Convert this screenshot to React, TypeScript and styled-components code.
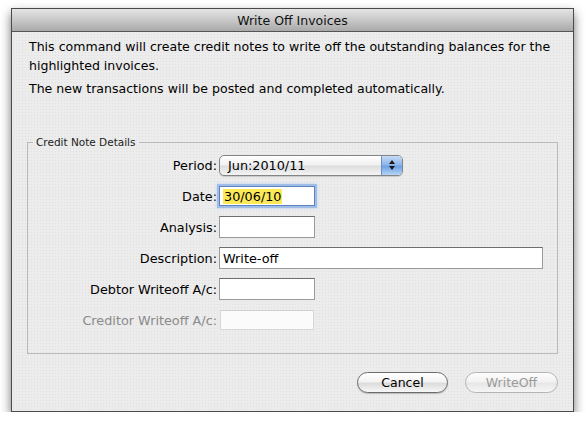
import React from "react";
import styled, { createGlobalStyle } from "styled-components";

const GlobalStyle = createGlobalStyle`
    html, body {
        margin: 0;
        padding: 0;
        background: #ffffff;
    }
    body {
        font-family: "DejaVu Sans", "Liberation Sans", sans-serif;
        color: #000;
    }
`;

const Page = styled.div`
    padding: 8px 12px 0 11px;
`;

const Window = styled.div`
    width: 561px;
    border: 1px solid #4a4a4a;
    background-color: #ececec;
    background-image: radial-gradient(rgba(0, 0, 0, 0.05) 0.6px, transparent 0.8px);
    background-size: 3px 3px;
    box-shadow: 0 5px 10px rgba(0, 0, 0, 0.55);
`;

const TitleBar = styled.div`
    height: 22px;
    border-bottom: 1px solid #555;
    background: linear-gradient(#e4e4e4, #c8c8c8 50%, #a9a9a9);
    display: flex;
    align-items: center;
    justify-content: center;
    font-size: 12.5px;
    color: #111;
`;

const Content = styled.div`
    padding: 5px 15px 18px 15px;
`;

const Para = styled.p<{ $gap?: number }>`
    margin: ${(p) => p.$gap ?? 0}px -14px 0 2px;
    font-size: 12.55px;
    line-height: 19px;
`;

const Group = styled.fieldset`
    margin: 38px 0 0 0;
    padding: 6px 0 22px 0;
    border: 1px solid #b9b9b9;
    border-radius: 0;
`;

const Legend = styled.legend`
    margin-left: 5px;
    padding: 0 3px;
    font-size: 10.5px;
    color: #222;
`;

const Form = styled.div`
    display: grid;
    grid-template-columns: 189px 1fr;
    grid-auto-rows: 22px;
    column-gap: 2px;
    row-gap: 9px;
    align-items: center;
`;

const Label = styled.label<{ $disabled?: boolean }>`
    text-align: right;
    font-size: 12.8px;
    color: ${(p) => (p.$disabled ? "#8a8a8a" : "#000")};
`;

const Field = styled.div<{ $width: number; $focus?: boolean; $disabled?: boolean }>`
    box-sizing: border-box;
    width: ${(p) => p.$width}px;
    height: 22px;
    background: ${(p) => (p.$disabled ? "#fbfbfb" : "#fff")};
    border: 1px solid ${(p) => (p.$disabled ? "#d6d6d6" : "#9a9a9a")};
    border-top-color: ${(p) => (p.$disabled ? "#cfcfcf" : "#6e6e6e")};
    ${(p) => (p.$disabled ? "margin-left: 1px; width: " + (p.$width - 2) + "px; height: 20px;" : "")}
    font-size: 12.8px;
    display: flex;
    align-items: center;
    padding-left: 3px;
    ${(p) =>
        p.$focus
            ? `height: 20px; border-color: #5d82c1; box-shadow: 0 0 0 2px #9fbde6, 0 0 3px 2px #b9d0ee;`
            : ""}
`;

const Highlight = styled.span`
    background: #fbe958;
    padding: 0 1px;
`;

const Popup = styled.div`
    box-sizing: border-box;
    width: 184px;
    height: 21px;
    border: 1px solid #858585;
    border-radius: 5px;
    background: linear-gradient(#ffffff, #f1f1f1 45%, #dedede 55%, #f4f4f4);
    display: flex;
    align-items: center;
    overflow: hidden;
    font-size: 12.8px;
    box-shadow: 0 1px 1px rgba(0, 0, 0, 0.15);
`;

const PopupText = styled.span`
    flex: 1;
    padding-left: 8px;
`;

const PopupArrows = styled.div`
    width: 20px;
    height: 100%;
    border-left: 1px solid #6f8fc0;
    background: linear-gradient(#c6dbf5, #8db6ea 45%, #6ea2e3 55%, #b5d4f7);
    display: flex;
    align-items: center;
    justify-content: center;
`;

const Buttons = styled.div`
    display: flex;
    justify-content: flex-end;
    gap: 17px;
    margin-top: 18px;
`;

const Button = styled.button<{ $width: number }>`
    box-sizing: border-box;
    width: ${(p) => p.$width}px;
    height: 21px;
    border-radius: 11px;
    border: 1px solid #6a6a6a;
    background: linear-gradient(#ffffff, #f3f3f3 45%, #dcdcdc 55%, #f7f7f7);
    font-family: "DejaVu Sans", "Liberation Sans", sans-serif;
    font-size: 12.5px;
    color: #000;
    padding: 0;
    box-shadow: 0 1px 1px rgba(0, 0, 0, 0.2);

    &:disabled {
        border-color: #b4b4b4;
        color: #9a9a9a;
        box-shadow: none;
        background: linear-gradient(#fdfdfd, #f2f2f2 45%, #e7e7e7 55%, #f6f6f6);
    }
`;

const App: React.FC = () => {
    return (
        <Page>
            <GlobalStyle />
            <Window>
                <TitleBar>Write Off Invoices</TitleBar>
                <Content>
                    <Para>
                        This command will create credit notes to write off the outstanding balances for the
                        highlighted invoices.
                    </Para>
                    <Para $gap={4}>The new transactions will be posted and completed automatically.</Para>
                    <Group>
                        <Legend>Credit Note Details</Legend>
                        <Form>
                            <Label>Period:</Label>
                            <Popup>
                                <PopupText>Jun:2010/11</PopupText>
                                <PopupArrows>
                                    <svg width="8" height="12" viewBox="0 0 8 12">
                                        <path d="M4 1 L7 5 L1 5 Z" fill="#1a1a1a" />
                                        <path d="M4 11 L7 7 L1 7 Z" fill="#1a1a1a" />
                                    </svg>
                                </PopupArrows>
                            </Popup>
                            <Label>Date:</Label>
                            <Field $width={96} $focus>
                                <Highlight>30/06/10</Highlight>
                            </Field>
                            <Label>Analysis:</Label>
                            <Field $width={96} />
                            <Label>Description:</Label>
                            <Field $width={324}>Write-off</Field>
                            <Label>Debtor Writeoff A/c:</Label>
                            <Field $width={96} />
                            <Label $disabled>Creditor Writeoff A/c:</Label>
                            <Field $width={96} $disabled />
                        </Form>
                    </Group>
                    <Buttons>
                        <Button $width={91}>Cancel</Button>
                        <Button $width={93} disabled>
                            WriteOff
                        </Button>
                    </Buttons>
                </Content>
            </Window>
        </Page>
    );
};

export default App;
